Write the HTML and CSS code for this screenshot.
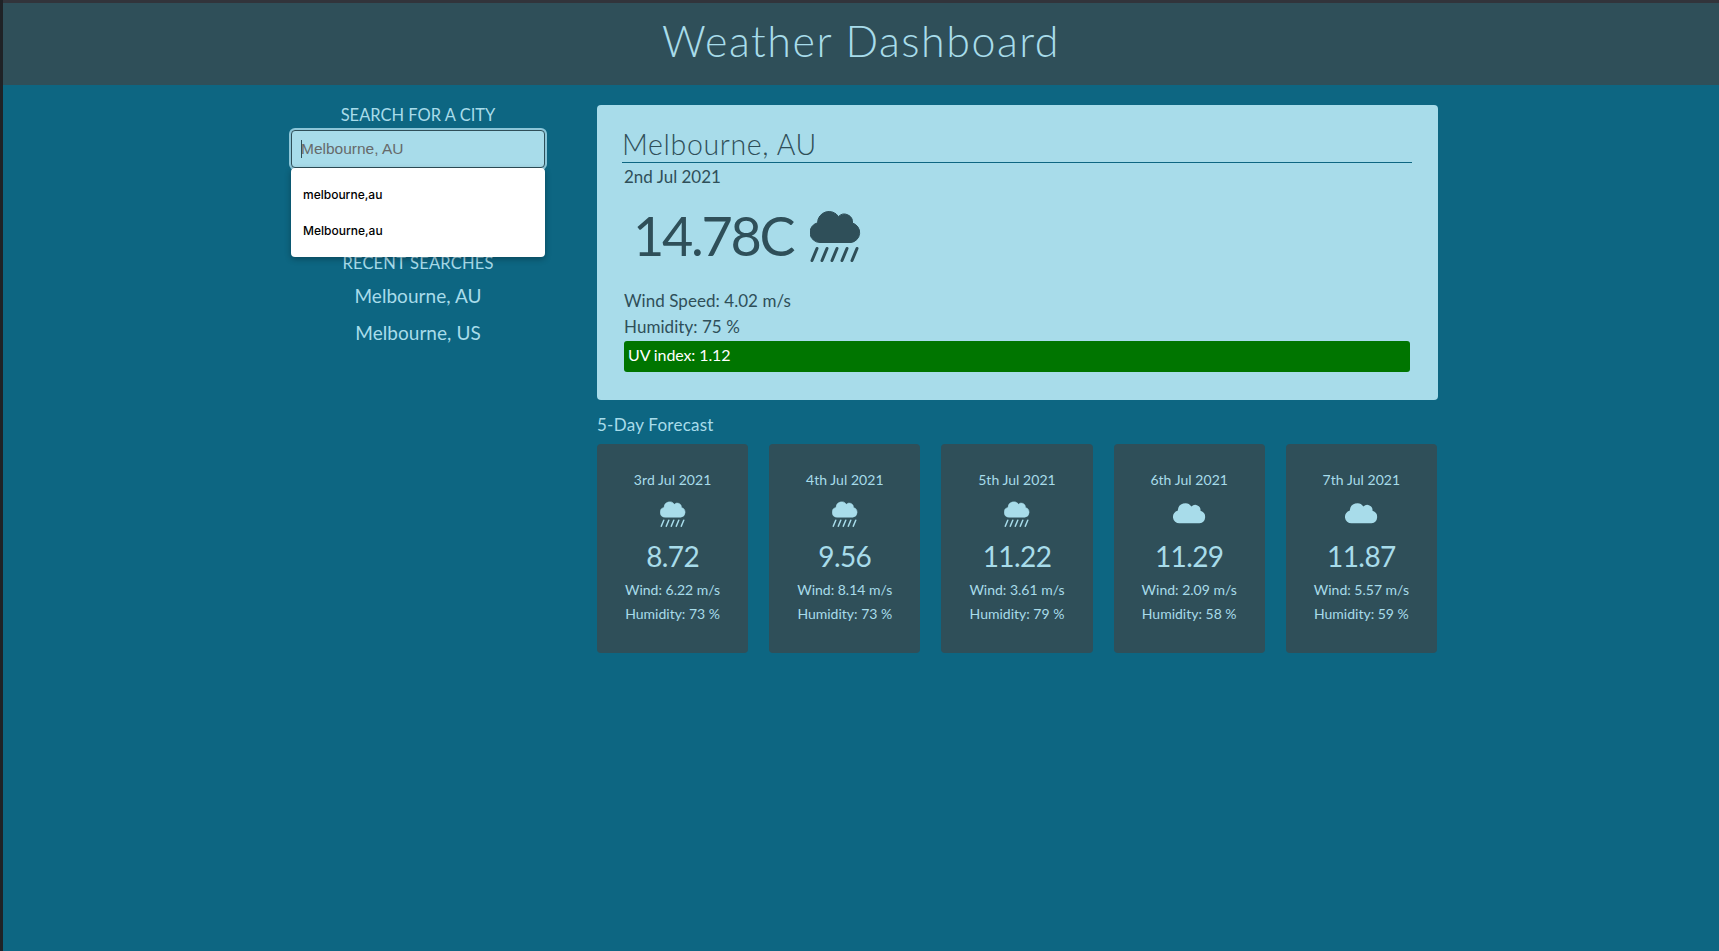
FILE: index.html
```html
<!DOCTYPE html>
<html lang="en">

<head>
    <meta charset="UTF-8">
    <meta name="viewport" content="width=device-width, initial-scale=1.0">
    <title>Weather Dashboard</title>
    <link rel="stylesheet" href="styles.css">
</head>

<body>
    <svg class="icon-defs" aria-hidden="true">
        <symbol id="cloud" viewBox="0 0 51 33">
            <path d="M10 32.5A10 10 0 0 1 7.5 12.8 11.5 11.5 0 0 1 28.5 6.5 8.2 8.2 0 0 1 42.5 13 10 10 0 0 1 41 32.5Z" />
        </symbol>
        <symbol id="rain" viewBox="0 0 51 52">
            <path d="M10 32.5A10 10 0 0 1 7.5 12.8 11.5 11.5 0 0 1 28.5 6.5 8.2 8.2 0 0 1 42.5 13 10 10 0 0 1 41 32.5Z" />
            <path class="drops" d="M2 50.5 7 38.5M12 50.5 17 38.5M22 50.5 27 38.5M32 50.5 37 38.5M42 50.5 47 38.5" />
        </symbol>
    </svg>

    <div class="frame">
        <header class="top-bar">
            <h1>Weather Dashboard</h1>
        </header>

        <main class="page">
            <section class="search">
                <h2>SEARCH FOR A CITY</h2>
                <div class="search-box">
                    <input type="text" id="city" placeholder="Melbourne, AU">
                    <span class="caret"></span>
                    <ul class="suggestions">
                        <li>melbourne,au</li>
                        <li>Melbourne,au</li>
                    </ul>
                </div>
                <h2 class="recent-title">RECENT SEARCHES</h2>
                <a class="recent">Melbourne, AU</a>
                <a class="recent">Melbourne, US</a>
            </section>

            <section class="weather">
                <div class="today">
                    <h2>Melbourne, AU</h2>
                    <p class="today-date">2nd Jul 2021</p>
                    <div class="today-temp">
                        <span>14.78C</span>
                        <svg class="icon-big"><use href="#rain"></use></svg>
                    </div>
                    <p class="today-line">Wind Speed: 4.02 m/s</p>
                    <p class="today-line">Humidity: 75 %</p>
                    <p class="uv">UV index: 1.12</p>
                </div>

                <h3 class="forecast-title">5-Day Forecast</h3>
                <div class="forecast">
                    <div class="day">
                        <p class="day-date">3rd Jul 2021</p>
                        <svg class="icon-rain"><use href="#rain"></use></svg>
                        <p class="day-temp">8.72</p>
                        <p class="day-line">Wind: 6.22 m/s</p>
                        <p class="day-line">Humidity: 73 %</p>
                    </div>
                    <div class="day">
                        <p class="day-date">4th Jul 2021</p>
                        <svg class="icon-rain"><use href="#rain"></use></svg>
                        <p class="day-temp">9.56</p>
                        <p class="day-line">Wind: 8.14 m/s</p>
                        <p class="day-line">Humidity: 73 %</p>
                    </div>
                    <div class="day">
                        <p class="day-date">5th Jul 2021</p>
                        <svg class="icon-rain"><use href="#rain"></use></svg>
                        <p class="day-temp">11.22</p>
                        <p class="day-line">Wind: 3.61 m/s</p>
                        <p class="day-line">Humidity: 79 %</p>
                    </div>
                    <div class="day">
                        <p class="day-date">6th Jul 2021</p>
                        <svg class="icon-cloud"><use href="#cloud"></use></svg>
                        <p class="day-temp">11.29</p>
                        <p class="day-line">Wind: 2.09 m/s</p>
                        <p class="day-line">Humidity: 58 %</p>
                    </div>
                    <div class="day">
                        <p class="day-date">7th Jul 2021</p>
                        <svg class="icon-cloud"><use href="#cloud"></use></svg>
                        <p class="day-temp">11.87</p>
                        <p class="day-line">Wind: 5.57 m/s</p>
                        <p class="day-line">Humidity: 59 %</p>
                    </div>
                </div>
            </section>
        </main>
    </div>
</body>

</html>
```

FILE: styles.css
```css
* {
    box-sizing: border-box;
}

html,
body {
    height: 100%;
}

body {
    margin: 0;
    background-color: #1f2226;
    font-family: "Lato", "Open Sans", sans-serif;
    overflow: hidden;
}

h1,
h2,
h3,
p,
ul {
    margin: 0;
    padding: 0;
    font-weight: 400;
}

.icon-defs {
    display: none;
}

.frame {
    height: 100%;
    margin-left: 3px;
    border-top: 3px solid #32343b;
    background-color: #0d6682;
}

.top-bar {
    height: 82px;
    background-color: #2f4f59;
    text-align: center;
}

.top-bar h1 {
    padding-top: 11px;
    color: #a8dcea;
    font-size: 43px;
    font-weight: 300;
    letter-spacing: 1.5px;
    line-height: 54px;
}

.page {
    display: grid;
    grid-template-columns: 254px 841px;
    column-gap: 52px;
    padding-left: 288px;
}

/* left column */
.search {
    display: flex;
    flex-direction: column;
    align-items: center;
    padding-top: 20px;
    color: #a8dcea;
}

.search h2 {
    font-size: 16.5px;
    line-height: 20px;
}

.search-box {
    position: relative;
    width: 100%;
    margin-top: 5px;
}

.search-box input {
    display: block;
    width: 100%;
    height: 38px;
    padding: 0 9px;
    border: 1px solid #2f4f59;
    border-radius: 4px;
    outline: none;
    box-shadow: 0 0 0 2px #8cc6d8;
    background-color: #a8dcea;
    color: #2f4f59;
    font-family: "Liberation Sans", sans-serif;
    font-size: 15.5px;
}

.search-box input::placeholder {
    color: #666a6b;
    opacity: 1;
}

.caret {
    position: absolute;
    top: 10px;
    left: 10px;
    width: 1px;
    height: 18px;
    background-color: #2f4f59;
}

.suggestions {
    position: absolute;
    top: 38px;
    left: 0;
    right: 0;
    height: 89px;
    padding-top: 9px;
    border-radius: 4px;
    background-color: #fff;
    box-shadow: 0 2px 6px rgba(0, 0, 0, 0.3);
    list-style: none;
}

.suggestions li {
    height: 36px;
    padding-left: 12px;
    color: #000;
    font-family: "Inter", sans-serif;
    font-size: 12px;
    font-weight: 500;
    line-height: 36px;
}

.search .recent-title {
    margin-top: 85px;
    letter-spacing: 0.2px;
}

.recent {
    margin-top: 13px;
    font-size: 19px;
    line-height: 24px;
    letter-spacing: 0.05px;
}

.recent-title + .recent {
    margin-top: 11px;
}

/* today card */
.weather {
    padding-top: 20px;
}

.today {
    height: 295px;
    padding: 23px 26px 0 27px;
    border-radius: 4px;
    background-color: #a8dcea;
    color: #2f4f59;
}

.today h2 {
    margin-left: -2px;
    padding-bottom: 1px;
    border-bottom: 1px solid #0d6682;
    font-size: 28.5px;
    font-weight: 300;
    line-height: 33px;
    letter-spacing: 0.65px;
}

.today-date {
    margin-top: 4px;
    font-size: 17px;
    line-height: 20px;
}

.today-temp {
    display: flex;
    align-items: center;
    gap: 17px;
    height: 68px;
    margin: 14px 0 19px;
    padding-left: 9px;
    font-size: 54px;
    font-weight: 400;
    letter-spacing: -2.3px;
}

.icon-big {
    width: 51px;
    height: 52px;
    margin-top: 2px;
    fill: #2f4f59;
    stroke: #2f4f59;
}

.drops {
    fill: none;
    stroke-width: 3;
    stroke-linecap: round;
}

.icon-big path:first-child,
.icon-rain path:first-child,
.icon-cloud path {
    stroke: none;
}

.today-line {
    font-size: 17px;
    line-height: 26px;
    letter-spacing: 0.05px;
}

.uv {
    height: 31px;
    margin-top: 1px;
    margin-right: 2px;
    padding-left: 4px;
    border-radius: 3px;
    background-color: #007500;
    color: #fff;
    font-size: 16px;
    letter-spacing: -0.1px;
    line-height: 28px;
}

/* forecast */
.forecast-title {
    margin-top: 15px;
    color: #a8dcea;
    font-size: 17px;
    line-height: 20px;
    letter-spacing: 0.25px;
}

.forecast {
    display: grid;
    grid-template-columns: repeat(5, 1fr);
    column-gap: 21px;
    margin-top: 9px;
    margin-right: 1px;
}

.day {
    display: flex;
    flex-direction: column;
    align-items: center;
    height: 209px;
    padding-top: 27px;
    border-radius: 4px;
    background-color: #2f4f59;
    color: #a8dcea;
}

.day-date {
    font-size: 14px;
    line-height: 18px;
    letter-spacing: 0.05px;
}

.icon-rain {
    width: 26px;
    height: 26px;
    margin-top: 12px;
    fill: #a8dcea;
    stroke: #a8dcea;
}

.icon-cloud {
    width: 33px;
    height: 22px;
    margin: 13px 0 3px;
    fill: #a8dcea;
}

.day-temp {
    margin-top: 12px;
    font-size: 28px;
    line-height: 34px;
    letter-spacing: -0.6px;
}

.day-line {
    margin-top: 5px;
    font-size: 14px;
    line-height: 19px;
}

.day-temp + .day-line {
    margin-top: 7px;
}
```
